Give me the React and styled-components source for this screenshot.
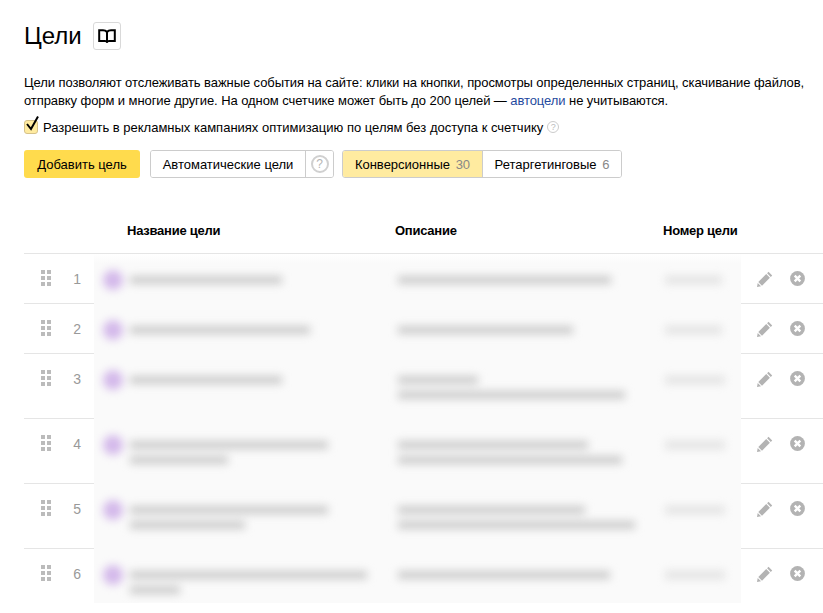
import styled, { createGlobalStyle } from "styled-components";

const goals = [
  { height: 50, name: [152], desc: [213], num: 57 },
  { height: 50, name: [180], desc: [175], num: 57 },
  { height: 65, name: [152], desc: [80, 227], num: 60 },
  { height: 65, name: [198, 98], desc: [190, 224], num: 60 },
  { height: 65, name: [198, 115], desc: [187, 237], num: 60 },
  { height: 65, name: [237, 50], desc: [212], num: 60 },
];

const BookIcon = () => (
  <svg width="18" height="14" viewBox="0 0 18 14" fill="none" stroke="#000" strokeWidth="2">
    <path d="M9 3C8 1.8 6.5 1.2 5 1.2H1.2V12H7C8 12 8.7 12.2 9 13C9.3 12.2 10 12 11 12H16.8V1.2H13C11.5 1.2 10 1.8 9 3V12.5" />
  </svg>
);

const CheckIcon = () => (
  <svg width="16" height="18" viewBox="0 0 16 18" fill="none" stroke="#000" strokeWidth="2">
    <path d="M3 9L7 14L14 1.5" />
  </svg>
);

const PencilIcon = () => (
  <svg width="16" height="16" viewBox="0 0 16 16" fill="#b3b3b3">
    <path d="M11.5 .8L15.2 4.5L13.8 5.9L10.1 2.2ZM9.2 3.1L12.9 6.8L5 14.7L1.3 11ZM.7 12L4 15.3L0 16Z" />
  </svg>
);

const CloseIcon = () => (
  <svg width="15" height="15" viewBox="0 0 15 15">
    <circle cx="7.5" cy="7.5" r="7.4" fill="#b3b3b3" />
    <path d="M4.7 4.7L10.3 10.3M10.3 4.7L4.7 10.3" stroke="#fff" strokeWidth="2.4" />
  </svg>
);

const App = () => {
  return (
    <Page>
      <GlobalStyle />
      <TitleRow>
        <Title>Цели</Title>
        <BookButton>
          <BookIcon />
        </BookButton>
      </TitleRow>
      <Intro>
        Цели позволяют отслеживать важные события на сайте: клики на кнопки, просмотры определенных страниц, скачивание файлов,
        <br />
        отправку форм и многие другие. На одном счетчике может быть до 200 целей — <IntroLink>автоцели</IntroLink> не учитываются.
      </Intro>
      <CheckRow>
        <CheckBox>
          <CheckIcon />
        </CheckBox>
        Разрешить в рекламных кампаниях оптимизацию по целям без доступа к счетчику
        <SmallHint>?</SmallHint>
      </CheckRow>
      <Toolbar>
        <AddButton>Добавить цель</AddButton>
        <Group>
          <Segment $width={154}>Автоматические цели</Segment>
          <Segment $width={28}>
            <Hint>?</Hint>
          </Segment>
        </Group>
        <Group $gap={8}>
          <Segment $width={139} $active>
            Конверсионные <Count>30</Count>
          </Segment>
          <Segment $width={139}>
            Ретаргетинговые <Count>6</Count>
          </Segment>
        </Group>
      </Toolbar>
      <TableHead>
        <span>Название цели</span>
        <span>Описание</span>
        <span>Номер цели</span>
      </TableHead>
      <Goals>
        {goals.map((goal, i) => (
          <Row key={i} $height={goal.height}>
            <Handle>
              {[0, 1, 2, 3, 4, 5].map((n) => (
                <i key={n} />
              ))}
            </Handle>
            <Index>{i + 1}</Index>
            <Actions>
              <PencilIcon />
              <CloseIcon />
            </Actions>
          </Row>
        ))}
        <Censored>
          <BlurLayer>
            {goals.map((goal, i) => (
              <BlurRow key={i} $height={goal.height}>
                <Dot />
                <BlurCell>
                  {goal.name.map((w, n) => (
                    <BlurLine key={n} style={{ width: w }} />
                  ))}
                </BlurCell>
                <BlurCell>
                  {goal.desc.map((w, n) => (
                    <BlurLine key={n} style={{ width: w }} />
                  ))}
                </BlurCell>
                <BlurCell>
                  <BlurLine $light style={{ width: goal.num }} />
                </BlurCell>
              </BlurRow>
            ))}
          </BlurLayer>
        </Censored>
      </Goals>
    </Page>
  );
};

const GlobalStyle = createGlobalStyle`
  html, body {
    margin: 0;
    height: 613px;
    overflow: hidden;
    background: #fff;
  }
`;

const Page = styled.div`
  padding: 22px 0 0 24px;
  font-family: "Liberation Sans", Arial, sans-serif;
  font-size: 13px;
  color: #000;
  height: 591px;
  overflow: hidden;
`;

const TitleRow = styled.div`
  display: flex;
  align-items: center;
  gap: 11px;
  height: 28px;
`;

const Title = styled.h1`
  margin: 0;
  font-size: 24px;
  font-weight: 400;
  line-height: 28px;
`;

const BookButton = styled.div`
  width: 28px;
  height: 28px;
  box-sizing: border-box;
  border: 1px solid #d9d9d9;
  border-radius: 3px;
  display: flex;
  align-items: center;
  justify-content: center;
`;

const Intro = styled.p`
  margin: 24px 0 0;
  line-height: 18px;
  white-space: nowrap;
  letter-spacing: -0.08px;
`;

const IntroLink = styled.span`
  color: #1f4a9e;
`;

const CheckRow = styled.div`
  display: flex;
  align-items: center;
  height: 18px;
  margin-top: 8px;
`;

const CheckBox = styled.div`
  position: relative;
  width: 14px;
  height: 14px;
  box-sizing: border-box;
  margin-right: 5px;
  background: #ffeba0;
  border: 1px solid #d6c28a;
  border-radius: 3px;

  svg {
    position: absolute;
    left: -1px;
    top: -6px;
  }
`;

const SmallHint = styled.span`
  width: 12px;
  height: 12px;
  box-sizing: border-box;
  margin-left: 4px;
  border: 1px solid #ccc;
  border-radius: 50%;
  color: #bbb;
  font-size: 9px;
  line-height: 10px;
  text-align: center;
`;

const Toolbar = styled.div`
  display: flex;
  height: 28px;
  margin-top: 14px;
`;

const AddButton = styled.div`
  width: 116px;
  border-radius: 3px;
  background: #ffdb4d;
  display: flex;
  align-items: center;
  justify-content: center;
  margin-right: 10px;
`;

const Group = styled.div`
  display: flex;
  margin-left: ${(p) => p.$gap || 0}px;
  border: 1px solid #ccc;
  border-radius: 3px;
  box-sizing: border-box;
  overflow: hidden;
`;

const Segment = styled.div`
  width: ${(p) => p.$width}px;
  box-sizing: border-box;
  display: flex;
  align-items: center;
  justify-content: center;
  gap: 2px;
  white-space: pre;
  background: ${(p) => (p.$active ? "#ffeba0" : "#fff")};
  & + & {
    border-left: 1px solid #ccc;
  }
`;

const Count = styled.span`
  color: #888;
`;

const Hint = styled.span`
  width: 18px;
  height: 18px;
  box-sizing: border-box;
  border: 2px solid #d0d0d0;
  border-radius: 50%;
  color: #b5b5b5;
  font-size: 12px;
  line-height: 14px;
  text-align: center;
`;

const TableHead = styled.div`
  display: grid;
  grid-template-columns: 268px 268px 1fr;
  align-items: center;
  height: 45px;
  margin-top: 26px;
  padding: 4px 0 0 103px;
  border-bottom: 1px solid #e5e5e5;
  font-weight: 700;
  letter-spacing: -0.25px;
`;

const Goals = styled.div`
  position: relative;
`;

const Row = styled.div`
  display: flex;
  height: ${(p) => p.$height}px;
  box-sizing: border-box;
  border-bottom: 1px solid #e5e5e5;
  padding: 16px 0 0 17px;
`;

const Handle = styled.div`
  display: grid;
  grid-template-columns: 4px 4px;
  grid-auto-rows: 4px;
  gap: 2px;
  width: 10px;
  height: 16px;

  i {
    background: #bbb;
  }
`;

const Index = styled.div`
  width: 30px;
  margin-top: 1px;
  text-align: right;
  font-size: 14px;
  line-height: 16px;
  color: #999;
`;

const Actions = styled.div`
  display: flex;
  align-items: flex-start;
  gap: 17px;
  margin-left: auto;
  padding-right: 18px;
  margin-top: 1px;
`;

const Censored = styled.div`
  position: absolute;
  top: 0;
  left: 70px;
  width: 647px;
  height: 349px;
  overflow: hidden;
  background: linear-gradient(#fff, #fafafa 9px);
`;

const BlurLayer = styled.div`
  filter: blur(4px);
`;

const BlurRow = styled.div`
  position: relative;
  display: grid;
  grid-template-columns: 268px 267px 1fr;
  height: ${(p) => p.$height}px;
  padding-left: 36px;
  padding-top: 22px;
  box-sizing: border-box;
`;

const Dot = styled.div`
  position: absolute;
  left: 9px;
  top: 16px;
  width: 20px;
  height: 20px;
  border-radius: 50%;
  background: #d3b8ea;
`;

const BlurCell = styled.div`
  display: flex;
  flex-direction: column;
  gap: 7px;
`;

const BlurLine = styled.div`
  height: 8px;
  background: ${(p) => (p.$light ? "#e2e2e2" : "#cbcbcb")};
`;

export default App;
